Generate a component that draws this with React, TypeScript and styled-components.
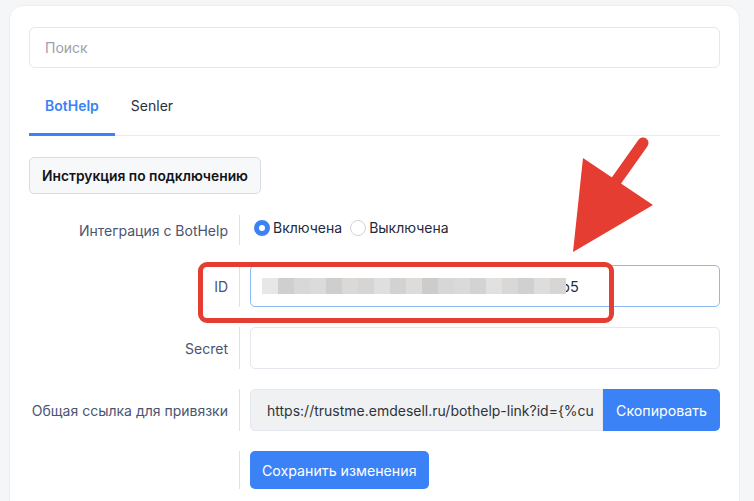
import React from "react";
import styled, { createGlobalStyle } from "styled-components";

const Global = createGlobalStyle`
  html, body { margin: 0; padding: 0; }
  body {
    background: #f5f6f7;
    font-family: Inter, "Noto Sans", "Liberation Sans", sans-serif;
    font-size: 14px;
    color: #212529;
    overflow: hidden;
  }
  * { box-sizing: border-box; }
`;

const Page = styled.div`
  position: relative;
  width: 754px;
  height: 501px;
  overflow: hidden;
`;

const Card = styled.div`
  margin: 5px 14px 0 9px;
  background: #ffffff;
  border: 1px solid #eceef2;
  border-radius: 14px;
  padding: 21px 19px 30px 19px;
`;

const Search = styled.div`
  height: 41px;
  border: 1px solid #e4e7ee;
  border-radius: 6px;
  display: flex;
  align-items: center;
  padding: 0 15px;
  color: #9ba1ab;
  font-size: 14px;
`;

const Tabs = styled.div`
  display: flex;
  margin-top: 16px;
  border-bottom: 1px solid #e9ebf1;
`;

const Tab = styled.div<{ $active?: boolean }>`
  padding: 12px 16px 17px 16px;
  line-height: 20px;
  font-size: 14px;
  font-weight: ${(p) => (p.$active ? 600 : 400)};
  color: ${(p) => (p.$active ? "#3b82f6" : "#2b2f3a")};
  border-bottom: 3px solid ${(p) => (p.$active ? "#3b82f6" : "transparent")};
  margin-bottom: -1px;
`;

const GuideButton = styled.div`
  display: inline-flex;
  align-items: center;
  height: 37px;
  margin-top: 21px;
  padding: 0 12px;
  background: #f7f8fa;
  border: 1px solid #d9dce2;
  border-radius: 5px;
  font-weight: 600;
  font-size: 13.8px;
  color: #111418;
`;

const Form = styled.div`
  margin-top: 21px;
  display: flex;
  flex-direction: column;
  gap: 20px;
`;

const Row = styled.div`
  display: grid;
  grid-template-columns: 211px minmax(0, 1fr);
  align-items: stretch;
`;

const Label = styled.div<{ $h: number }>`
  height: ${(p) => p.$h}px;
  display: flex;
  align-items: center;
  justify-content: flex-end;
  padding-right: 11px;
  border-right: 1px solid #dfe2e7;
  color: #4a5472;
  font-size: 14px;
`;

const Field = styled.div`
  padding-left: 10px;
  display: flex;
  align-items: flex-start;
  min-width: 0;
`;

const Radios = styled.div`
  display: flex;
  align-items: center;
  gap: 4px;
  padding-top: 3px;
  color: #252a3a;
`;

const RadioItem = styled.label`
  display: flex;
  align-items: center;
  gap: 3px;
  font-size: 14px;
`;

const RadioDot = styled.span<{ $on?: boolean }>`
  width: 16px;
  height: 16px;
  border-radius: 50%;
  margin-left: 4px;
  margin-top: 2px;
  background: #ffffff;
  border: ${(p) => (p.$on ? "5px solid #3b82f6" : "1px solid #cfd3d8")};
`;

const Input = styled.div<{ $focus?: boolean; $gray?: boolean }>`
  flex: 1;
  min-width: 0;
  height: 42px;
  border: 1px solid ${(p) => (p.$focus ? "#8dbaf5" : "#e4e7ee")};
  background: ${(p) => (p.$gray ? "#f0f1f3" : "#ffffff")};
  border-radius: ${(p) => (p.$gray ? "5px 0 0 5px" : "5px")};
  display: flex;
  align-items: center;
  padding: 0 11px;
  color: #2b2f36;
  font-size: 14px;
  overflow: hidden;
  white-space: nowrap;
`;

const LinkText = styled.span`
  padding-left: 5px;
  font-size: 14px;
  color: #2f333a;
`;

const Blur = styled.span`
  display: inline-flex;
  height: 16px;
  position: relative;
  z-index: 1;
`;

const BlurCell = styled.span<{ $c: string }>`
  width: 16px;
  height: 16px;
  background: ${(p) => p.$c};
`;

const Tail = styled.span`
  margin-left: -5px;
  font-size: 14.5px;
  color: #2b2f36;
`;

const BlueButton = styled.div<{ $joined?: boolean }>`
  flex: none;
  display: flex;
  align-items: center;
  justify-content: center;
  background: #3b82f6;
  color: #ffffff;
  font-size: 14.2px;
  border-radius: ${(p) => (p.$joined ? "0 5px 5px 0" : "5px")};
  height: ${(p) => (p.$joined ? 42 : 38)}px;
  padding: 0 ${(p) => (p.$joined ? 13 : 12)}px;
`;

const Highlight = styled.div`
  position: absolute;
  left: 198px;
  top: 262px;
  width: 416px;
  height: 61px;
  border: 5px solid #e53d31;
  border-radius: 9px;
  pointer-events: none;
`;

const Arrow = styled.svg`
  position: absolute;
  left: 0;
  top: 0;
  pointer-events: none;
`;

const blurShades = [
  "#e8e7e6", "#d0cfcf", "#d9d8d8", "#dcdbdb", "#cfcecd", "#dad9d8",
  "#d6d5d4", "#e0dfdf", "#d3d2d1", "#dddcdb", "#cdcccb", "#d8d7d7",
  "#dbdad9", "#d4d3d3", "#e2e1e0", "#d9d8d7", "#d1d0d0", "#dedddc",
  "#d7d6d5",
];

export default function App() {
  return (
    <Page>
      <Global />
      <Card>
        <Search>Поиск</Search>
        <Tabs>
          <Tab $active>BotHelp</Tab>
          <Tab>Senler</Tab>
        </Tabs>
        <GuideButton>Инструкция по подключению</GuideButton>
        <Form>
          <Row>
            <Label $h={30}>Интеграция с BotHelp</Label>
            <Field>
              <Radios>
                <RadioItem>
                  <RadioDot $on />
                  Включена
                </RadioItem>
                <RadioItem>
                  <RadioDot />
                  Выключена
                </RadioItem>
              </Radios>
            </Field>
          </Row>
          <Row>
            <Label $h={42}>ID</Label>
            <Field>
              <Input $focus>
                <Blur>
                  {blurShades.map((c, i) => (
                    <BlurCell key={i} $c={c} />
                  ))}
                </Blur>
                <Tail>b5</Tail>
              </Input>
            </Field>
          </Row>
          <Row>
            <Label $h={42}>Secret</Label>
            <Field>
              <Input />
            </Field>
          </Row>
          <Row>
            <Label $h={42}>Общая ссылка для привязки</Label>
            <Field>
              <Input $gray>
                <LinkText>https://trustme.emdesell.ru/bothelp-link?id={"{%cu"}</LinkText>
              </Input>
              <BlueButton $joined>Скопировать</BlueButton>
            </Field>
          </Row>
          <Row>
            <Label $h={38} />
            <Field>
              <BlueButton>Сохранить изменения</BlueButton>
            </Field>
          </Row>
        </Form>
      </Card>
      <Highlight />
      <Arrow width="754" height="501" viewBox="0 0 754 501">
        <line x1="643" y1="143" x2="604" y2="198" stroke="#e53d31" strokeWidth="11" strokeLinecap="round" />
        <polygon points="583,158 653,205 573,252" fill="#e53d31" />
      </Arrow>
    </Page>
  );
}
